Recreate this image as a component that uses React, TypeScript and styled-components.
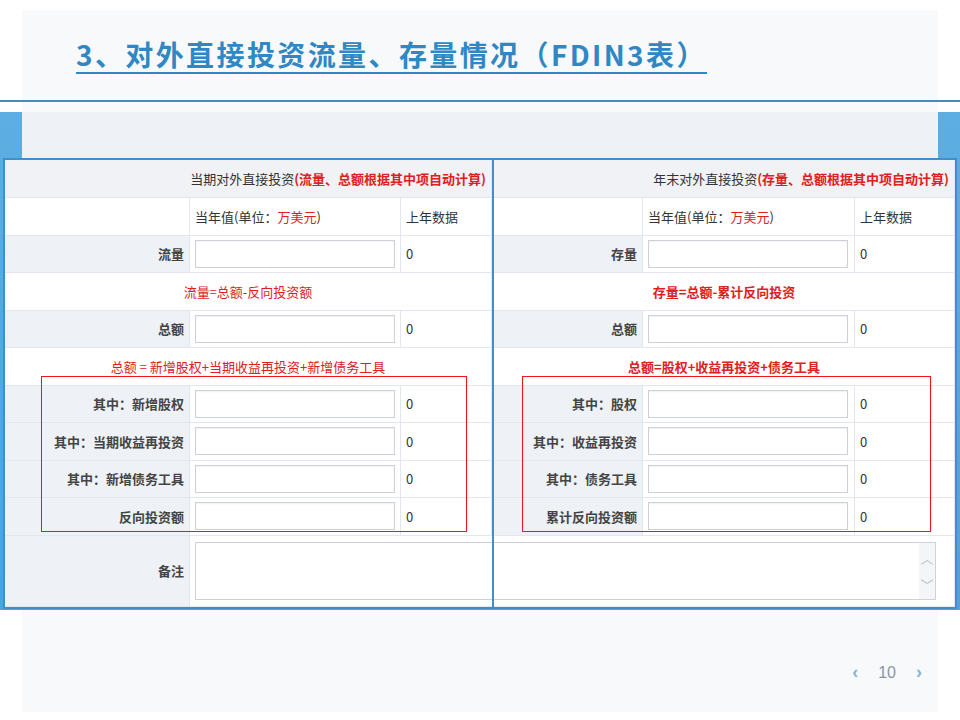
import React from 'react'
import styled, { createGlobalStyle } from 'styled-components'

const Global = createGlobalStyle`
  body { margin: 0; background: #fff; font-family: "Noto Sans CJK SC", "Noto Sans", sans-serif; }
`

const Page = styled.div`
  width: 960px;
  height: 720px;
  padding-top: 10px;
  box-sizing: border-box;
  position: relative;
  overflow: hidden;
`

const TitleArea = styled.div`
  margin: 0 22px;
  height: 90px;
  background: #f8f9fa;
  box-sizing: border-box;
  padding: 27px 0 0 54px;
`

const Title = styled.h1`
  margin: 0;
  display: inline-block;
  font-size: 28px;
  font-weight: 700;
  color: #2f88c4;
  border-bottom: 2px solid #2f88c4;
  line-height: 35px;
  letter-spacing: 2.4px;
`

const Rule = styled.div`
  height: 2px;
  background: #3d8ec6;
`

const Gap = styled.div`
  margin: 0 22px;
  height: 10px;
  background: #f8f9fa;
`

const Band = styled.div`
  background: linear-gradient(180deg, #5daee2, #4da3dc);
  height: 498px;
  display: flex;
  flex-direction: column;
`

const BandTop = styled.div`
  margin: 0 22px;
  height: 46px;
  background: #eef2f6;
`

const Table = styled.div`
  margin: 0 3px;
  height: 447px;
  border: 2px solid #3f8fcc;
  background: #fff;
  display: grid;
  grid-template-columns: 489px 1fr;
  position: relative;
`

const Panel = styled.div<{ $cols: string; $left?: boolean }>`
  display: grid;
  grid-template-columns: ${(p) => p.$cols};
  grid-template-rows: 38px repeat(9, 37.5px) 1fr;
  border-right: ${(p) => (p.$left ? '2px solid #3f8fcc' : 'none')};
`

const Cell = styled.div<{ $bg?: string; $align?: string; $span?: number }>`
  grid-column: span ${(p) => p.$span || 1};
  background: ${(p) => p.$bg || '#fff'};
  border-bottom: 1px solid #e2e7ed;
  border-right: 1px solid #e2e7ed;
  display: flex;
  align-items: center;
  justify-content: ${(p) => p.$align || 'flex-start'};
  padding: 0 5px;
  font-size: 13px;
  color: #333;
  box-sizing: border-box;
  white-space: nowrap;
`

const Label = styled(Cell)`
  background: #eef1f5;
  justify-content: flex-end;
  font-weight: 700;
  color: #444;
`

const Red = styled.span`
  color: #e0201c;
  font-weight: 700;
`

const RedPlain = styled.span`
  color: #e0201c;
`

const Input = styled.div`
  width: 198px;
  height: 26px;
  border: 1px solid #ccd2d8;
  background: #fff;
  box-shadow: inset 0 1px 2px rgba(0,0,0,0.06);
`

const TextArea = styled.div<{ $right?: boolean }>`
  height: 56px;
  flex: 1;
  border: 1px solid #ccd2d8;
  border-right: ${(p) => (p.$right ? '1px solid #ccd2d8' : 'none')};
  border-left: ${(p) => (p.$right ? 'none' : '1px solid #ccd2d8')};
  background: #fff;
  display: flex;
  justify-content: flex-end;
`

const Scroll = styled.div`
  width: 16px;
  background: #f4f5f7;
  display: flex;
  flex-direction: column;
  justify-content: center;
  align-items: center;
  gap: 8px;
  color: #b9bfc6;
`

const RedBox = styled.div<{ $l: number; $w: number }>`
  position: absolute;
  left: ${(p) => p.$l}px;
  width: ${(p) => p.$w}px;
  top: 216px;
  height: 154px;
  border: 1.5px solid #f0141c;
  pointer-events: none;
`

const Bottom = styled.div`
  margin: 0 22px;
  height: 102px;
  background: #f8f9fa;
  position: relative;
`

const Pager = styled.div`
  position: absolute;
  right: 16px;
  top: 52px;
  display: flex;
  align-items: center;
  gap: 20px;
  font-family: "Liberation Sans", Arial, sans-serif;
  font-size: 16px;
  color: #8a959f;
`

const Chev = styled.span`
  color: #7fb4dc;
  font-size: 18px;
  font-weight: 700;
`

const leftRows = ['其中：新增股权', '其中：当期收益再投资', '其中：新增债务工具', '反向投资额']
const rightRows = ['其中：股权', '其中：收益再投资', '其中：债务工具', '累计反向投资额']

const InputCell = () => (
  <Cell>
    <Input />
  </Cell>
)

const Side = ({ left }: { left: boolean }) => {
  const cols = left ? '185px 211px 1fr' : '149px 212px 1fr'
  const rows = left ? leftRows : rightRows
  return (
    <Panel $cols={cols} $left={left}>
      <Cell $span={3} $bg="#f0f2f5" $align="flex-end">
        {left ? '当期对外直接投资' : '年末对外直接投资'}
        <Red>{left ? '(流量、总额根据其中项自动计算)' : '(存量、总额根据其中项自动计算)'}</Red>
      </Cell>
      <Cell />
      <Cell>
        当年值(单位：<RedPlain>万美元</RedPlain>)
      </Cell>
      <Cell>上年数据</Cell>
      <Label>{left ? '流量' : '存量'}</Label>
      <InputCell />
      <Cell>0</Cell>
      <Cell $span={3} $align="center">
        {left ? <RedPlain>流量=总额-反向投资额</RedPlain> : <Red>存量=总额-累计反向投资</Red>}
      </Cell>
      <Label>总额</Label>
      <InputCell />
      <Cell>0</Cell>
      <Cell $span={3} $align="center">
        {left ? <RedPlain>总额 = 新增股权+当期收益再投资+新增债务工具</RedPlain> : <Red>总额=股权+收益再投资+债务工具</Red>}
      </Cell>
      {rows.map((r) => (
        <React.Fragment key={r}>
          <Label>{r}</Label>
          <InputCell />
          <Cell>0</Cell>
        </React.Fragment>
      ))}
      {left ? (
        <>
          <Label>备注</Label>
          <Cell $span={2} style={{ paddingRight: 0, borderRight: 'none' }}>
            <TextArea />
          </Cell>
        </>
      ) : (
        <Cell $span={3} style={{ paddingLeft: 0, paddingRight: 18 }}>
          <TextArea $right>
            <Scroll>
              <span>︿</span>
              <span>﹀</span>
            </Scroll>
          </TextArea>
        </Cell>
      )}
    </Panel>
  )
}

export default function App() {
  return (
    <Page>
      <Global />
      <TitleArea>
        <Title>3、对外直接投资流量、存量情况（FDIN3表）</Title>
      </TitleArea>
      <Rule />
      <Gap />
      <Band>
        <BandTop />
        <Table>
          <Side left />
          <Side left={false} />
          <RedBox $l={36} $w={424} />
          <RedBox $l={517} $w={407} />
        </Table>
      </Band>
      <Bottom>
        <Pager>
          <Chev>‹</Chev>
          <span>10</span>
          <Chev>›</Chev>
        </Pager>
      </Bottom>
    </Page>
  )
}
